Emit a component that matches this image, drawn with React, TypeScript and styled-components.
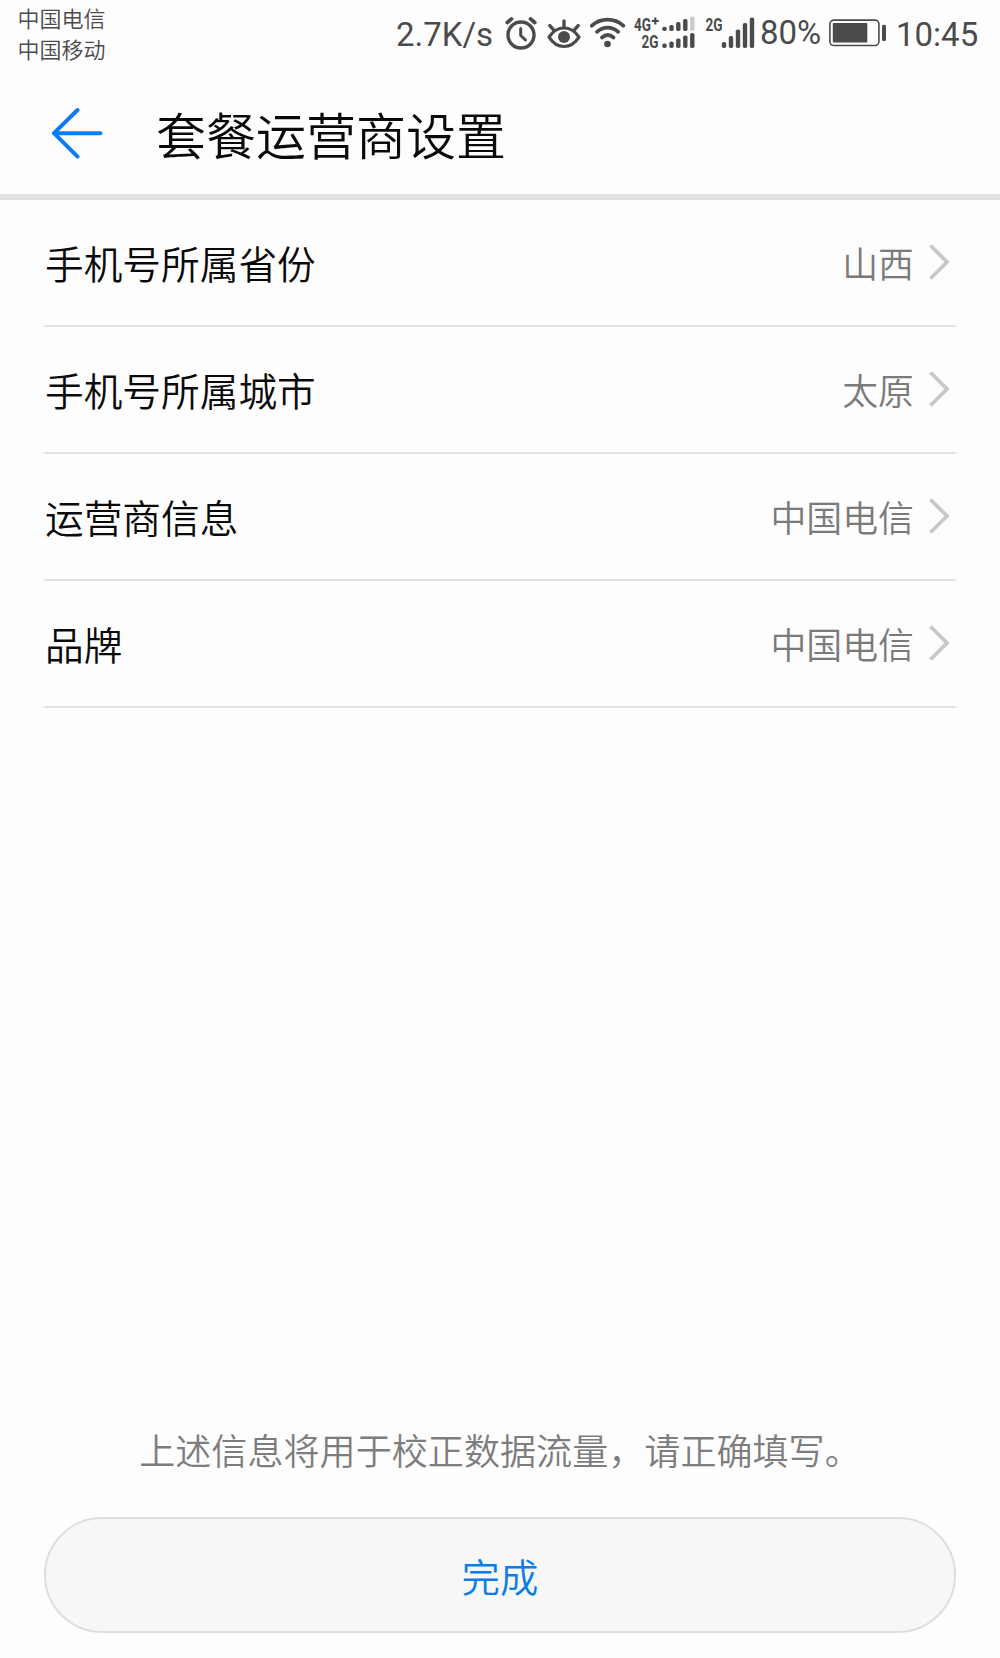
import React from "react";
import styled, { createGlobalStyle } from "styled-components";

const INK = "#4b4b4b";
const BLUE = "#0c7ce6";
const CJK = '"Noto Sans CJK SC DemiLight", "Noto Sans CJK SC", sans-serif';

const GlobalStyle = createGlobalStyle`
  * { box-sizing: border-box; }
  body {
    margin: 0;
    background: #fdfdfd;
    font-family: Roboto, "Noto Sans CJK SC", sans-serif;
  }
`;

const Screen = styled.div`
  display: flex;
  flex-direction: column;
  width: 1000px;
  height: 1658px;
  background: #fdfdfd;
  overflow: hidden;
`;

const StatusBar = styled.div`
  display: flex;
  height: 70px;
  color: ${INK};
`;

const Carriers = styled.div`
  width: 396px;
  padding: 2px 0 0 17.5px;
  font: 350 22px/30.5px ${CJK};
`;

const StatusText = styled.span<{ $width: number; $top: number }>`
  flex: none;
  width: ${(p) => p.$width}px;
  padding-top: ${(p) => p.$top}px;
  font: 400 33px/38px Roboto, sans-serif;
  white-space: nowrap;
`;

const StatusIcon = styled.svg`
  display: block;
  flex: none;
  height: 70px;
`;

const Header = styled.header`
  display: flex;
  align-items: center;
  height: 130px;
  padding: 0 0 0 51px;
  border-bottom: 6px solid #e2e2e2;
`;

const BackButton = styled.button`
  display: flex;
  width: 105px;
  padding: 0;
  margin-top: 2px;
  border: 0;
  background: none;
`;

const Title = styled.h1`
  margin: 1px 0 0;
  color: #0a0a0a;
  font: 350 50px/72px ${CJK};
`;

const List = styled.main`
  flex: 1;
  padding: 0 44px;
`;

const Row = styled.div`
  display: flex;
  align-items: center;
  height: 127px;
  padding: 0 6px 0 1px;
  border-bottom: 2px solid #e3e3e3;
`;

const Label = styled.span`
  flex: 1;
  margin-bottom: 2px;
  color: #0a0a0a;
  font: 350 38.7px/56px ${CJK};
`;

const Value = styled.span`
  margin: 0 15px 1px 0;
  color: #7a7a7a;
  font: 350 35.9px/52px ${CJK};
`;

const Chevron = styled.svg`
  display: block;
  width: 21px;
  height: 36px;
  margin-bottom: 1px;
`;

const Footer = styled.footer`
  display: flex;
  flex-direction: column;
  align-items: center;
  padding: 0 44px 25px;
`;

const Note = styled.p`
  margin: 0 0 42px;
  color: #7d7d7d;
  font: 350 36.1px/52px ${CJK};
  white-space: nowrap;
`;

const DoneButton = styled.button`
  width: 912px;
  height: 116px;
  padding: 0;
  border: 2px solid #dedede;
  border-radius: 58px;
  background: #f7f7f7;
  color: ${BLUE};
  font: 350 38.4px/56px ${CJK};
`;

const AlarmIcon = () => (
  <StatusIcon width="42" viewBox="500 0 42 70" fill="none" stroke={INK} strokeLinecap="round">
    <circle cx="521" cy="35" r="13" strokeWidth="3.4" />
    <path d="M507.3 22.5l4.2-3.6M534.7 22.5l-4.2-3.6" strokeWidth="3.8" />
    <path d="M520.7 28.5v7l4.8 4.5" strokeWidth="3" strokeLinejoin="round" />
  </StatusIcon>
);

const EyeIcon = () => (
  <StatusIcon width="43" viewBox="542 0 43 70" fill="none" stroke={INK} strokeLinecap="round">
    <path d="M549 37.2C553 31 558 28 564 28s11 3 15 9.2c-4 6.3-9 9.3-15 9.3s-11-3-15-9.3z" strokeWidth="3.2" strokeLinejoin="round" />
    <circle cx="564" cy="37" r="6" fill={INK} stroke="none" />
    <path d="M564 21v6.5M549.8 25.6l4 4.6M578.2 25.6l-4 4.6" strokeWidth="3.4" />
  </StatusIcon>
);

const WifiIcon = () => (
  <StatusIcon width="45" viewBox="585 0 45 70" fill="none" stroke={INK} strokeWidth="3.8" strokeLinecap="round">
    <path d="M591.8 25.7c9-8 22.5-8 31.5 0" />
    <path d="M597 31.8c6.3-5.6 14.9-5.6 21.2 0" />
    <path d="M602 37.5c3.6-3.2 7.9-3.2 11.5 0" />
    <circle cx="607.5" cy="44" r="3.3" fill={INK} stroke="none" />
  </StatusIcon>
);

type Bar = { x: number; top: number; faded?: boolean };

const Bars = ({ bars, bottom }: { bars: Bar[]; bottom: number }) => (
  <>
    {bars.map((b) => (
      <rect key={b.x} x={b.x} y={b.top} width="4.4" height={bottom - b.top} rx="1.7" fill={b.faded ? "#cccccc" : INK} />
    ))}
  </>
);

const DualSignalIcon = () => (
  <StatusIcon width="72" viewBox="630 0 72 70" fill={INK} fontFamily="Roboto, sans-serif" fontWeight="700" fontSize="18">
    <text x="634" y="31.3" textLength="17" lengthAdjust="spacingAndGlyphs">4G</text>
    <path d="M655.3 17.5v7M651.8 21h7" stroke={INK} strokeWidth="2.2" />
    <text x="641.5" y="47.8" textLength="17" lengthAdjust="spacingAndGlyphs">2G</text>
    <Bars bottom={31} bars={[{ x: 662.3, top: 26.8 }, { x: 669.3, top: 25 }, { x: 676.1, top: 22 }, { x: 683.1, top: 19 }, { x: 690.1, top: 16.5, faded: true }]} />
    <Bars bottom={48} bars={[{ x: 662.3, top: 43.6 }, { x: 669.3, top: 41.5 }, { x: 676.1, top: 38.5 }, { x: 683.1, top: 35.5 }, { x: 690.1, top: 33 }]} />
  </StatusIcon>
);

const SignalIcon = () => (
  <StatusIcon width="58" viewBox="702 0 58 70" fill={INK} fontFamily="Roboto, sans-serif" fontWeight="700" fontSize="18">
    <text x="705.5" y="31.3" textLength="17" lengthAdjust="spacingAndGlyphs">2G</text>
    <Bars bottom={48} bars={[{ x: 721.8, top: 42 }, { x: 728.8, top: 36 }, { x: 735.8, top: 29.5 }, { x: 742.8, top: 23 }, { x: 749.8, top: 17.5 }]} />
  </StatusIcon>
);

const BatteryIcon = () => (
  <StatusIcon width="74" viewBox="822 0 74 70">
    <rect x="829.9" y="20.1" width="49" height="25.4" rx="4" fill="none" stroke={INK} strokeWidth="1.6" />
    <rect x="832.8" y="23" width="34.5" height="19.5" rx="0.8" fill={INK} />
    <rect x="882" y="24.7" width="4" height="16.3" rx="1.5" fill={INK} />
  </StatusIcon>
);

const settings = [
  { label: "手机号所属省份", value: "山西" },
  { label: "手机号所属城市", value: "太原" },
  { label: "运营商信息", value: "中国电信" },
  { label: "品牌", value: "中国电信" },
];

export default function App() {
  return (
    <Screen>
      <GlobalStyle />
      <StatusBar>
        <Carriers>
          <div>中国电信</div>
          <div>中国移动</div>
        </Carriers>
        <StatusText $width={104} $top={16}>2.7K/s</StatusText>
        <AlarmIcon />
        <EyeIcon />
        <WifiIcon />
        <DualSignalIcon />
        <SignalIcon />
        <StatusText $width={62} $top={14}>80%</StatusText>
        <BatteryIcon />
        <StatusText $width={100} $top={16}>10:45</StatusText>
      </StatusBar>
      <Header>
        <BackButton aria-label="返回">
          <svg width="52" height="52" viewBox="0 0 52 52" fill="none" stroke="#0c7cf0" strokeWidth="4" strokeLinecap="round" strokeLinejoin="round">
            <path d="M26.5 3L3 26.2l23.5 23.5M3 26.2h46.5" />
          </svg>
        </BackButton>
        <Title>套餐运营商设置</Title>
      </Header>
      <List>
        {settings.map((item) => (
          <Row key={item.label}>
            <Label>{item.label}</Label>
            <Value>{item.value}</Value>
            <Chevron viewBox="0 0 21 36" fill="none" stroke="#c8c8c8" strokeWidth="3.8">
              <path d="M1.5 1.5l16.5 16.5-16.5 16.5" />
            </Chevron>
          </Row>
        ))}
      </List>
      <Footer>
        <Note>上述信息将用于校正数据流量，请正确填写。</Note>
        <DoneButton>完成</DoneButton>
      </Footer>
    </Screen>
  );
}
